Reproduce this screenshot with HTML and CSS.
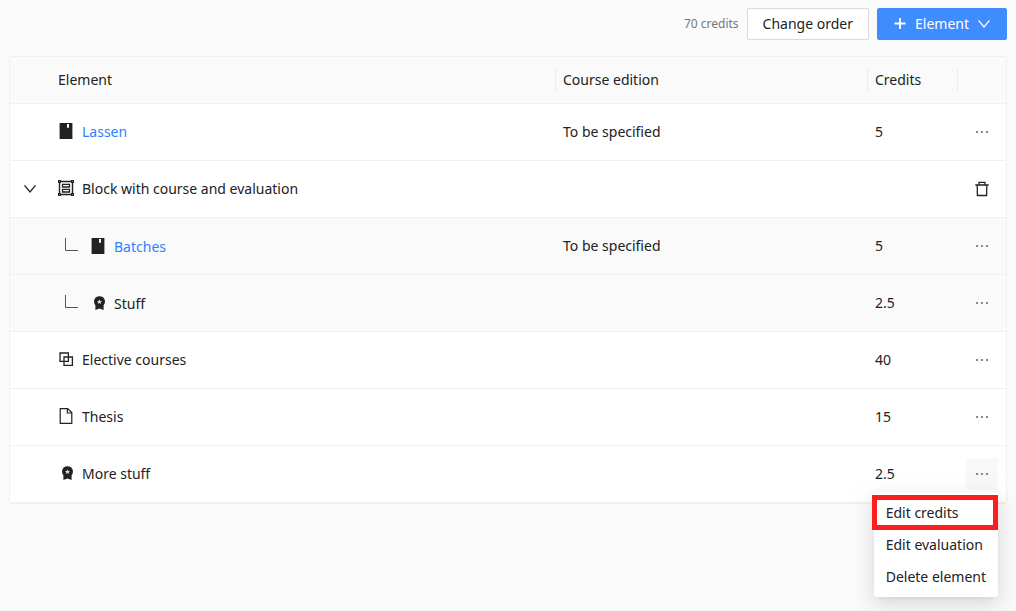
FILE: index.html
```html
<!DOCTYPE html>
<html lang="en">
<head>
<meta charset="utf-8">
<title>Course elements</title>
<link rel="stylesheet" href="styles.css">
</head>
<body>
<svg class="sprite" aria-hidden="true">
  <symbol id="book" viewBox="0 0 16 16"><path fill="currentColor" fill-rule="evenodd" d="M1.6 0H14.4V16H1.6ZM9 1V5L10 4.4L11 5V1Z"/></symbol>
  <symbol id="block" viewBox="0 0 16 16"><g fill="none" stroke="currentColor"><path stroke-width="1.4" d="M1.5 1.5H14.5V14.5H1.5Z"/><path stroke-width="1.3" d="M4.5 4.4H11.5V7H4.5ZM4.5 9.4H11.5V12H4.5Z"/></g><path fill="currentColor" d="M0 0H3V3H0ZM13 0H16V3H13ZM0 13H3V16H0ZM13 13H16V16H13Z"/><path fill="#fff" d="M1 1H2V2H1ZM14 1H15V2H14ZM1 14H2V15H1ZM14 14H15V15H14Z" opacity=".4"/></symbol>
  <symbol id="badge" viewBox="0 0 16 16"><path fill="currentColor" d="M9.5 1.2 11.4 1.5 13.4 2.6 14.6 4.5 15 6.6 14.6 8.7 13.6 10.2V15L9.5 13.6 5.4 15V10.2L4.4 8.7 4 6.6 4.4 4.5 5.6 2.6 7.6 1.5Z"/><path fill="#fff" d="M9.5 4.3 10.2 6H12L10.7 7.2 11.2 9 9.5 8 7.8 9 8.3 7.2 7 6H8.8Z" opacity=".85"/></symbol>
  <symbol id="blocks" viewBox="0 0 16 16"><path fill="none" stroke="currentColor" stroke-width="1.3" d="M2 2H10.4V10.4H2ZM6 6H14.4V14.4H6Z"/></symbol>
  <symbol id="file" viewBox="0 0 16 16"><path fill="none" stroke="currentColor" stroke-width="1.2" d="M2.2 .6H9.7L13.8 4.6V15.4H2.2ZM9.3 .8V5H13.6"/></symbol>
  <symbol id="down" viewBox="0 0 14 14"><path fill="none" stroke="currentColor" stroke-width="1.3" d="M1.5 3.3 7 10 12.5 3.3"/></symbol>
  <symbol id="plus" viewBox="0 0 14 14"><path fill="none" stroke="currentColor" stroke-width="1.8" d="M7 1V12M1.5 6.5H12.5"/></symbol>
  <symbol id="dots" viewBox="0 0 16 16"><path fill="currentColor" d="M2 7H4V9H2ZM7 7H9V9H7ZM12 7H14V9H12Z"/></symbol>
  <symbol id="trash" viewBox="0 0 16 16"><path fill="none" stroke="currentColor" stroke-width="1.3" d="M1.3 4H14.7M5 4V1.4H11V4M3.2 4 3.4 14.5H12.6L12.8 4"/></symbol>
  <symbol id="branch" viewBox="0 0 16 16"><path fill="none" stroke="currentColor" d="M1.5 1V13.5H14"/></symbol>
</svg>

<main class="page">
  <div class="toolbar">
    <span class="total">70 credits</span>
    <button class="btn" type="button">Change order</button>
    <button class="btn btn-primary" type="button"><svg class="icon-sm"><use href="#plus"/></svg>Element<svg class="icon-sm"><use href="#down"/></svg></button>
  </div>

  <table class="elements">
    <colgroup><col class="col-toggle"><col class="col-name"><col class="col-edition"><col class="col-credits"><col class="col-actions"></colgroup>
    <thead>
      <tr><th></th><th scope="col">Element</th><th class="divided" scope="col">Course edition</th><th class="divided" scope="col">Credits</th><th class="divided"></th></tr>
    </thead>
    <tbody>
      <tr>
        <td></td><td><div class="name"><svg class="icon"><use href="#book"/></svg><a href="#lassen">Lassen</a></div></td><td>To be specified</td><td>5</td>
        <td><button class="action" type="button" aria-label="More actions"><svg class="icon"><use href="#dots"/></svg></button></td>
      </tr>
      <tr>
        <td><button class="toggle" type="button" aria-label="Collapse block"><svg class="icon-sm"><use href="#down"/></svg></button></td><td><div class="name"><svg class="icon"><use href="#block"/></svg>Block with course and evaluation</div></td><td></td><td></td>
        <td><button class="action action-dark" type="button" aria-label="Delete block"><svg class="icon"><use href="#trash"/></svg></button></td>
      </tr>
      <tr class="nested">
        <td></td><td><div class="name"><svg class="icon branch"><use href="#branch"/></svg><svg class="icon"><use href="#book"/></svg><a href="#batches">Batches</a></div></td><td>To be specified</td><td>5</td>
        <td><button class="action" type="button" aria-label="More actions"><svg class="icon"><use href="#dots"/></svg></button></td>
      </tr>
      <tr class="nested">
        <td></td><td><div class="name"><svg class="icon branch"><use href="#branch"/></svg><svg class="icon"><use href="#badge"/></svg>Stuff</div></td><td></td><td>2.5</td>
        <td><button class="action" type="button" aria-label="More actions"><svg class="icon"><use href="#dots"/></svg></button></td>
      </tr>
      <tr>
        <td></td><td><div class="name"><svg class="icon"><use href="#blocks"/></svg>Elective courses</div></td><td></td><td>40</td>
        <td><button class="action" type="button" aria-label="More actions"><svg class="icon"><use href="#dots"/></svg></button></td>
      </tr>
      <tr>
        <td></td><td><div class="name"><svg class="icon"><use href="#file"/></svg>Thesis</div></td><td></td><td>15</td>
        <td><button class="action" type="button" aria-label="More actions"><svg class="icon"><use href="#dots"/></svg></button></td>
      </tr>
      <tr>
        <td></td><td><div class="name"><svg class="icon"><use href="#badge"/></svg>More stuff</div></td><td></td><td>2.5</td>
        <td>
          <div class="dropdown">
            <button class="action action-open" type="button" aria-label="More actions" aria-expanded="true"><svg class="icon"><use href="#dots"/></svg></button>
            <div class="menu">
              <button class="menu-item highlighted" type="button">Edit credits</button>
              <button class="menu-item" type="button">Edit evaluation</button>
              <button class="menu-item" type="button">Delete element</button>
            </div>
          </div>
        </td>
      </tr>
    </tbody>
  </table>
</main>
</body>
</html>
```
FILE: styles.css
```css
* { box-sizing: border-box; }

body {
  margin: 0;
  background: #fbfbfb;
  color: #222;
  font: 14px/22px "Noto Sans", "Open Sans", sans-serif;
}

button { font: inherit; color: inherit; cursor: pointer; }
a { color: #3080ff; text-decoration: none; }
svg { display: block; flex: none; }

.sprite { position: absolute; width: 0; height: 0; }
.icon { width: 16px; height: 16px; }
.icon-sm { width: 14px; height: 14px; }

.page { min-height: 100vh; padding: 8px 9px; }

.toolbar {
  display: flex;
  justify-content: flex-end;
  align-items: center;
  gap: 8px;
  margin-bottom: 16px;
}
.total { color: #777; font-size: 12px; }

.btn {
  display: flex;
  align-items: center;
  gap: 8px;
  height: 32px;
  padding: 0 15px;
  border: 1px solid #d9d9d9;
  border-radius: 2px;
  background: #fff;
}
.btn-primary { border-color: #3f8cff; background: #3f8cff; color: #fff; }

.elements {
  width: 100%;
  table-layout: fixed;
  border: 1px solid #f0f0f0;
  border-radius: 2px;
  border-spacing: 0;
  background: #fff;
}
.col-toggle { width: 40px; }
.col-edition { width: 312px; }
.col-credits { width: 90px; }
.col-actions { width: 49px; }

th {
  position: relative;
  height: 47px;
  padding: 0 8px;
  border-bottom: 1px solid #f0f0f0;
  background: #fafafa;
  font-weight: 400;
  text-align: left;
}
.divided::before {
  content: "";
  position: absolute;
  top: 12px;
  bottom: 12px;
  left: 0;
  width: 1px;
  background: #ebebeb;
}

td {
  height: 57px;
  padding: 12px 8px;
  border-bottom: 1px solid #f0f0f0;
}
td:last-child { padding-left: 9px; }
.nested td { background: #fafafa; }

.name { display: flex; align-items: center; gap: 8px; }
.nested .name { padding-top: 2px; }
.name .icon { margin-bottom: 2px; }
.name .branch { margin: 0 2px 4px 6px; color: #555; }

.toggle {
  display: block;
  padding: 4px 5px;
  border: 0;
  background: none;
}

.action {
  display: flex;
  align-items: center;
  justify-content: center;
  width: 32px;
  height: 32px;
  padding: 0;
  border: 0;
  border-radius: 2px;
  background: none;
  color: #888;
}
.action-dark { color: #222; }
.action-open { background: #f8f8f8; }

.dropdown { position: relative; width: 32px; }
.menu {
  position: absolute;
  top: 100%;
  right: 0;
  margin-top: 3px;
  padding: 4px 0;
  border-radius: 2px;
  background: #fff;
  box-shadow: 0 3px 6px -4px #0000001f, 0 6px 16px #00000014, 0 9px 28px 8px #0000000d;
}
.menu-item {
  display: block;
  width: 100%;
  padding: 5px 12px;
  border: 0;
  background: none;
  text-align: left;
  white-space: nowrap;
}
.highlighted { position: relative; }
.highlighted::after {
  content: "";
  position: absolute;
  inset: -2px 0 -1px -2px;
  border: 5px solid #fa1e1c;
}
```
